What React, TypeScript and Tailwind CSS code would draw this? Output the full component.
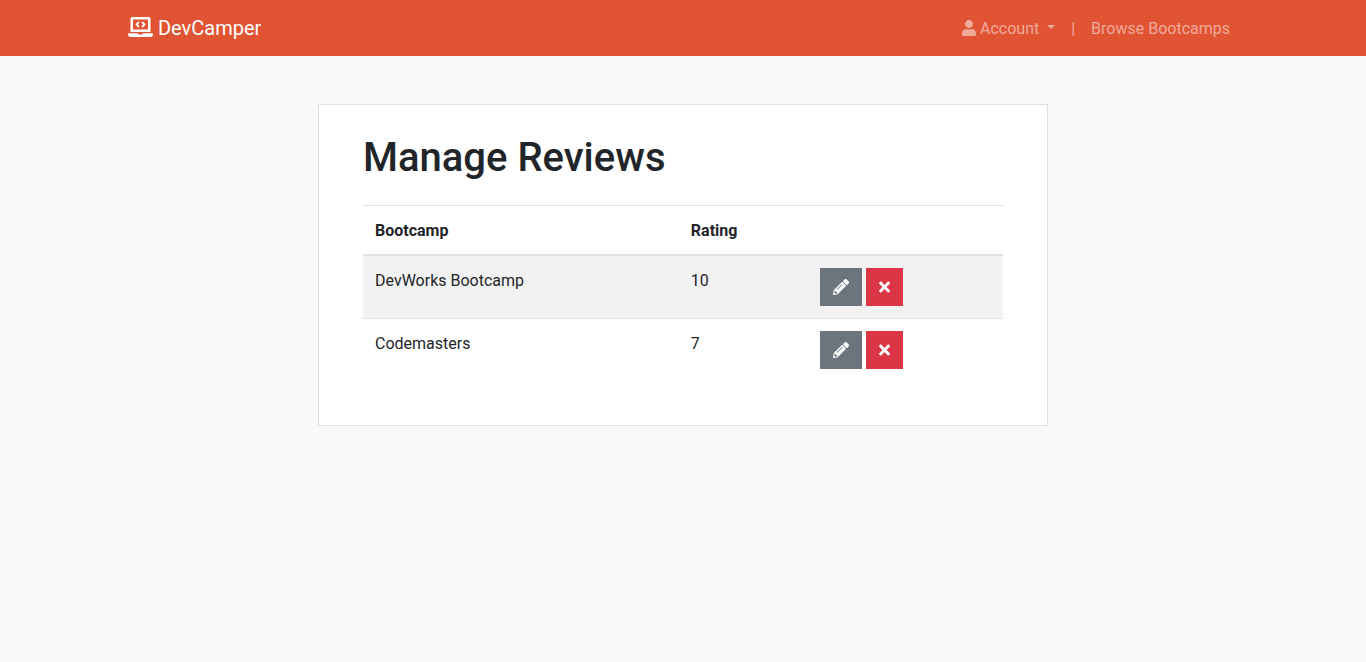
import { FaLaptopCode, FaPencilAlt, FaTimes, FaUser } from "react-icons/fa";

interface Review {
  bootcamp: string;
  rating: number;
}

const reviews: Review[] = [
  { bootcamp: "DevWorks Bootcamp", rating: 10 },
  { bootcamp: "Codemasters", rating: 7 },
];

function Navbar() {
  return (
    <nav className="bg-[#e15433] py-2">
      <div className="mx-auto flex max-w-[1140px] flex-wrap items-center justify-between px-[15px]">
        <a href="#" className="py-[5px] text-xl leading-[30px] text-white">
          <FaLaptopCode className="inline-block h-5 w-[25px] align-[-2px]" aria-hidden="true" /> DevCamper
        </a>
        <ul className="flex items-center text-base text-white/50">
          <li>
            <button type="button" className="block cursor-pointer px-2 pt-[9px] pb-[7px] leading-6" aria-haspopup="true">
              <FaUser className="inline-block h-4 w-[14px] align-[-2px]" aria-hidden="true" /> Account{" "}
              <span className="ml-1 inline-block border-x-4 border-t-4 border-x-transparent border-t-current align-[5px]" />
            </button>
          </li>
          <li className="px-2 pt-[9px] pb-[7px]">|</li>
          <li>
            <a href="#" className="block px-2 pt-[9px] pb-[7px]">
              Browse Bootcamps
            </a>
          </li>
        </ul>
      </div>
    </nav>
  );
}

function ReviewRow({ bootcamp, rating }: Review) {
  return (
    <tr className="border-t border-[#dee2e6] odd:bg-[#f2f2f2]">
      <td className="px-3 pt-[13px] pb-[11px] align-top">{bootcamp}</td>
      <td className="px-3 pt-[13px] pb-[11px] align-top">{rating}</td>
      <td className="p-3 align-top">
        <div className="flex gap-1">
          <a
            href="#"
            aria-label={`Edit review of ${bootcamp}`}
            className="flex h-[38px] items-center bg-[#6c757d] px-[13px] text-white"
          >
            <FaPencilAlt className="size-4" aria-hidden="true" />
          </a>
          <button
            type="button"
            aria-label={`Delete review of ${bootcamp}`}
            className="flex h-[38px] cursor-pointer items-center bg-[#dc3545] px-[13px] text-white"
          >
            <FaTimes className="h-4 w-[11px]" aria-hidden="true" />
          </button>
        </div>
      </td>
    </tr>
  );
}

export default function App() {
  return (
    <div className="min-h-screen bg-[#f8f9fb] font-['Roboto',sans-serif] text-base text-[#212529]">
      <Navbar />
      <main className="mx-auto mt-12 max-w-[760px] px-[15px]">
        <section className="border border-[#dfdfdf] bg-white px-11 py-7">
          <h1 className="mb-[22px] text-[40px] leading-[50px] font-medium">Manage Reviews</h1>
          <table className="mb-4 w-full border-collapse text-left">
            <thead>
              <tr className="border-t border-b-2 border-[#dee2e6]">
                <th className="px-3 pt-[13px] pb-[11px] font-bold">Bootcamp</th>
                <th className="px-3 pt-[13px] pb-[11px] font-bold">Rating</th>
                <th className="p-3" aria-label="Actions" />
              </tr>
            </thead>
            <tbody>
              {reviews.map((review) => (
                <ReviewRow key={review.bootcamp} {...review} />
              ))}
            </tbody>
          </table>
        </section>
      </main>
    </div>
  );
}
